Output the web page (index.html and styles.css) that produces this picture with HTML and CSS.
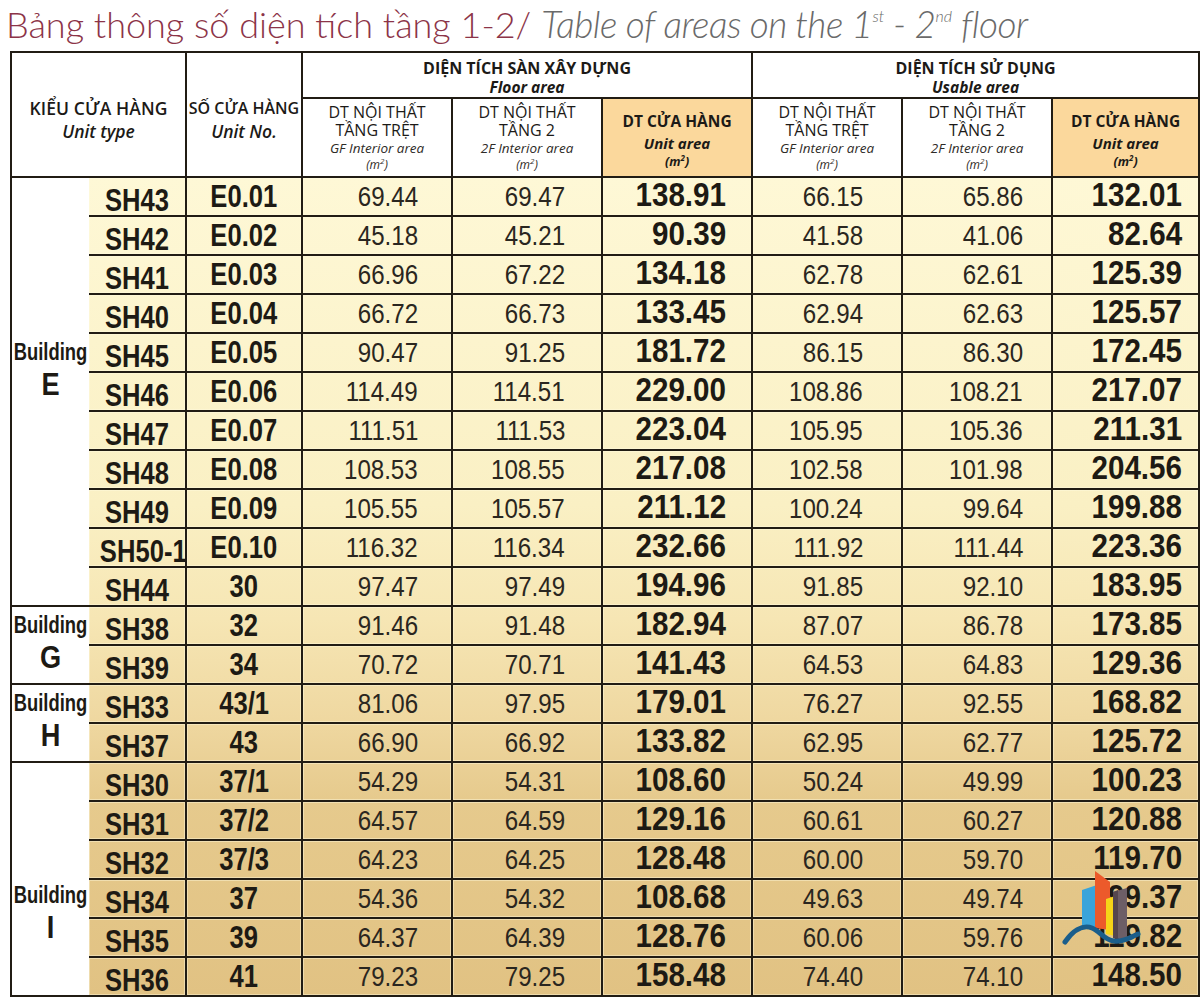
FILE: index.html
```html
<!DOCTYPE html>
<html lang="vi">
<head>
<meta charset="utf-8">
<title>Bảng thông số diện tích tầng 1-2</title>
<link rel="stylesheet" href="styles.css">
</head>
<body>
<div class="page">
  <h1 class="title"><span class="vi">Bảng thông số diện tích tầng 1-2/</span> <span class="en">Table of areas on the 1<sup>st</sup> - 2<sup>nd</sup> floor</span></h1>
  <table class="areas">
    <colgroup>
      <col class="c-bldg"><col class="c-type"><col class="c-no">
      <col class="c-val"><col class="c-val"><col class="c-val">
      <col class="c-val"><col class="c-val"><col class="c-last">
    </colgroup>
    <thead>
      <tr class="h1">
        <th rowspan="2" colspan="2" class="hd-main"><span class="m1 wide">KIỂU CỬA HÀNG</span><em class="m2">Unit type</em></th>
        <th rowspan="2" class="hd-main"><span class="m1">SỐ CỬA HÀNG</span><em class="m2">Unit No.</em></th>
        <th colspan="3" class="hd-group"><span class="g1">DIỆN TÍCH SÀN XÂY DỰNG</span><em class="g2">Floor area</em></th>
        <th colspan="3" class="hd-group"><span class="g1">DIỆN TÍCH SỬ DỤNG</span><em class="g2">Usable area</em></th>
      </tr>
      <tr class="h2">
        <th class="hd-sub"><span class="s1">DT NỘI THẤT</span><span class="s2">TẦNG TRỆT</span><em class="s3">GF Interior area</em><em class="s4">(m<sup>2</sup>)</em></th>
        <th class="hd-sub"><span class="s1">DT NỘI THẤT</span><span class="s2">TẦNG 2</span><em class="s3">2F Interior area</em><em class="s4">(m<sup>2</sup>)</em></th>
        <th class="hd-total"><span class="u1">DT CỬA HÀNG</span><em class="u2">Unit area</em><em class="u3">(m<sup>2</sup>)</em></th>
        <th class="hd-sub"><span class="s1">DT NỘI THẤT</span><span class="s2">TẦNG TRỆT</span><em class="s3">GF Interior area</em><em class="s4">(m<sup>2</sup>)</em></th>
        <th class="hd-sub"><span class="s1">DT NỘI THẤT</span><span class="s2">TẦNG 2</span><em class="s3">2F Interior area</em><em class="s4">(m<sup>2</sup>)</em></th>
        <th class="hd-total"><span class="u1">DT CỬA HÀNG</span><em class="u2">Unit area</em><em class="u3">(m<sup>2</sup>)</em></th>
      </tr>
    </thead>
    <tbody>
      <tr><td rowspan="11" class="bldg bldg-e"><span class="b-word">Building</span><span class="b-letter">E</span></td><td class="type"><span class="n">SH43</span></td><td class="no"><span class="n">E0.01</span></td><td class="v v4"><span class="n">69.44</span></td><td class="v v5"><span class="n">69.47</span></td><td class="t t6"><span class="n">138.91</span></td><td class="v v7"><span class="n">66.15</span></td><td class="v v8"><span class="n">65.86</span></td><td class="t t9"><span class="n">132.01</span></td></tr>
      <tr><td class="type"><span class="n">SH42</span></td><td class="no"><span class="n">E0.02</span></td><td class="v v4"><span class="n">45.18</span></td><td class="v v5"><span class="n">45.21</span></td><td class="t t6"><span class="n">90.39</span></td><td class="v v7"><span class="n">41.58</span></td><td class="v v8"><span class="n">41.06</span></td><td class="t t9"><span class="n">82.64</span></td></tr>
      <tr><td class="type"><span class="n">SH41</span></td><td class="no"><span class="n">E0.03</span></td><td class="v v4"><span class="n">66.96</span></td><td class="v v5"><span class="n">67.22</span></td><td class="t t6"><span class="n">134.18</span></td><td class="v v7"><span class="n">62.78</span></td><td class="v v8"><span class="n">62.61</span></td><td class="t t9"><span class="n">125.39</span></td></tr>
      <tr><td class="type"><span class="n">SH40</span></td><td class="no"><span class="n">E0.04</span></td><td class="v v4"><span class="n">66.72</span></td><td class="v v5"><span class="n">66.73</span></td><td class="t t6"><span class="n">133.45</span></td><td class="v v7"><span class="n">62.94</span></td><td class="v v8"><span class="n">62.63</span></td><td class="t t9"><span class="n">125.57</span></td></tr>
      <tr><td class="type"><span class="n">SH45</span></td><td class="no"><span class="n">E0.05</span></td><td class="v v4"><span class="n">90.47</span></td><td class="v v5"><span class="n">91.25</span></td><td class="t t6"><span class="n">181.72</span></td><td class="v v7"><span class="n">86.15</span></td><td class="v v8"><span class="n">86.30</span></td><td class="t t9"><span class="n">172.45</span></td></tr>
      <tr><td class="type"><span class="n">SH46</span></td><td class="no"><span class="n">E0.06</span></td><td class="v v4"><span class="n">114.49</span></td><td class="v v5"><span class="n">114.51</span></td><td class="t t6"><span class="n">229.00</span></td><td class="v v7"><span class="n">108.86</span></td><td class="v v8"><span class="n">108.21</span></td><td class="t t9"><span class="n">217.07</span></td></tr>
      <tr><td class="type"><span class="n">SH47</span></td><td class="no"><span class="n">E0.07</span></td><td class="v v4"><span class="n">111.51</span></td><td class="v v5"><span class="n">111.53</span></td><td class="t t6"><span class="n">223.04</span></td><td class="v v7"><span class="n">105.95</span></td><td class="v v8"><span class="n">105.36</span></td><td class="t t9"><span class="n">211.31</span></td></tr>
      <tr><td class="type"><span class="n">SH48</span></td><td class="no"><span class="n">E0.08</span></td><td class="v v4"><span class="n">108.53</span></td><td class="v v5"><span class="n">108.55</span></td><td class="t t6"><span class="n">217.08</span></td><td class="v v7"><span class="n">102.58</span></td><td class="v v8"><span class="n">101.98</span></td><td class="t t9"><span class="n">204.56</span></td></tr>
      <tr><td class="type"><span class="n">SH49</span></td><td class="no"><span class="n">E0.09</span></td><td class="v v4"><span class="n">105.55</span></td><td class="v v5"><span class="n">105.57</span></td><td class="t t6"><span class="n">211.12</span></td><td class="v v7"><span class="n">100.24</span></td><td class="v v8"><span class="n">99.64</span></td><td class="t t9"><span class="n">199.88</span></td></tr>
      <tr><td class="type"><span class="n">SH50-1</span></td><td class="no"><span class="n">E0.10</span></td><td class="v v4"><span class="n">116.32</span></td><td class="v v5"><span class="n">116.34</span></td><td class="t t6"><span class="n">232.66</span></td><td class="v v7"><span class="n">111.92</span></td><td class="v v8"><span class="n">111.44</span></td><td class="t t9"><span class="n">223.36</span></td></tr>
      <tr><td class="type"><span class="n">SH44</span></td><td class="no"><span class="n">30</span></td><td class="v v4"><span class="n">97.47</span></td><td class="v v5"><span class="n">97.49</span></td><td class="t t6"><span class="n">194.96</span></td><td class="v v7"><span class="n">91.85</span></td><td class="v v8"><span class="n">92.10</span></td><td class="t t9"><span class="n">183.95</span></td></tr>
      <tr><td rowspan="2" class="bldg bldg-g"><span class="b-word">Building</span><span class="b-letter">G</span></td><td class="type"><span class="n">SH38</span></td><td class="no"><span class="n">32</span></td><td class="v v4"><span class="n">91.46</span></td><td class="v v5"><span class="n">91.48</span></td><td class="t t6"><span class="n">182.94</span></td><td class="v v7"><span class="n">87.07</span></td><td class="v v8"><span class="n">86.78</span></td><td class="t t9"><span class="n">173.85</span></td></tr>
      <tr><td class="type"><span class="n">SH39</span></td><td class="no"><span class="n">34</span></td><td class="v v4"><span class="n">70.72</span></td><td class="v v5"><span class="n">70.71</span></td><td class="t t6"><span class="n">141.43</span></td><td class="v v7"><span class="n">64.53</span></td><td class="v v8"><span class="n">64.83</span></td><td class="t t9"><span class="n">129.36</span></td></tr>
      <tr><td rowspan="2" class="bldg bldg-h"><span class="b-word">Building</span><span class="b-letter">H</span></td><td class="type"><span class="n">SH33</span></td><td class="no"><span class="n">43/1</span></td><td class="v v4"><span class="n">81.06</span></td><td class="v v5"><span class="n">97.95</span></td><td class="t t6"><span class="n">179.01</span></td><td class="v v7"><span class="n">76.27</span></td><td class="v v8"><span class="n">92.55</span></td><td class="t t9"><span class="n">168.82</span></td></tr>
      <tr><td class="type"><span class="n">SH37</span></td><td class="no"><span class="n">43</span></td><td class="v v4"><span class="n">66.90</span></td><td class="v v5"><span class="n">66.92</span></td><td class="t t6"><span class="n">133.82</span></td><td class="v v7"><span class="n">62.95</span></td><td class="v v8"><span class="n">62.77</span></td><td class="t t9"><span class="n">125.72</span></td></tr>
      <tr><td rowspan="6" class="bldg bldg-i"><span class="b-word">Building</span><span class="b-letter">I</span></td><td class="type"><span class="n">SH30</span></td><td class="no"><span class="n">37/1</span></td><td class="v v4"><span class="n">54.29</span></td><td class="v v5"><span class="n">54.31</span></td><td class="t t6"><span class="n">108.60</span></td><td class="v v7"><span class="n">50.24</span></td><td class="v v8"><span class="n">49.99</span></td><td class="t t9"><span class="n">100.23</span></td></tr>
      <tr><td class="type"><span class="n">SH31</span></td><td class="no"><span class="n">37/2</span></td><td class="v v4"><span class="n">64.57</span></td><td class="v v5"><span class="n">64.59</span></td><td class="t t6"><span class="n">129.16</span></td><td class="v v7"><span class="n">60.61</span></td><td class="v v8"><span class="n">60.27</span></td><td class="t t9"><span class="n">120.88</span></td></tr>
      <tr><td class="type"><span class="n">SH32</span></td><td class="no"><span class="n">37/3</span></td><td class="v v4"><span class="n">64.23</span></td><td class="v v5"><span class="n">64.25</span></td><td class="t t6"><span class="n">128.48</span></td><td class="v v7"><span class="n">60.00</span></td><td class="v v8"><span class="n">59.70</span></td><td class="t t9"><span class="n">119.70</span></td></tr>
      <tr><td class="type"><span class="n">SH34</span></td><td class="no"><span class="n">37</span></td><td class="v v4"><span class="n">54.36</span></td><td class="v v5"><span class="n">54.32</span></td><td class="t t6"><span class="n">108.68</span></td><td class="v v7"><span class="n">49.63</span></td><td class="v v8"><span class="n">49.74</span></td><td class="t t9"><span class="n">99.37</span></td></tr>
      <tr><td class="type"><span class="n">SH35</span></td><td class="no"><span class="n">39</span></td><td class="v v4"><span class="n">64.37</span></td><td class="v v5"><span class="n">64.39</span></td><td class="t t6"><span class="n">128.76</span></td><td class="v v7"><span class="n">60.06</span></td><td class="v v8"><span class="n">59.76</span></td><td class="t t9"><span class="n">119.82</span></td></tr>
      <tr><td class="type"><span class="n">SH36</span></td><td class="no"><span class="n">41</span></td><td class="v v4"><span class="n">79.23</span></td><td class="v v5"><span class="n">79.25</span></td><td class="t t6"><span class="n">158.48</span></td><td class="v v7"><span class="n">74.40</span></td><td class="v v8"><span class="n">74.10</span></td><td class="t t9"><span class="n">148.50</span></td></tr>
    </tbody>
  </table>
  <svg class="logo" viewBox="0 0 82 80" width="82" height="80" aria-hidden="true">
    <polygon points="20,22 35,17 35,60 20,58" fill="#3aa4da"/>
    <polygon points="33,3 48,14 48,62 33,60" fill="#ec5a2b"/>
    <polygon points="44,31 53,28 53,68 44,66" fill="#f5d418"/>
    <polygon points="51,24 65,20 65,72 51,70" fill="#6d5e66"/>
    <polygon points="51,24 56,22 56,71 51,70" fill="#54464e"/>
    <path d="M3,74 C10,64 20,56 30,60 C38,63 42,72 52,73 C60,74 68,70 76,66" fill="none" stroke="#1b5e8b" stroke-width="5" stroke-linecap="round"/>
  </svg>
</div>
</body>
</html>
```
FILE: styles.css
```css
html, body {
  margin: 0;
  padding: 0;
  background: #ffffff;
}

.page {
  position: relative;
  width: 1200px;
  height: 997px;
  overflow: hidden;
}

.title {
  margin: 0;
  padding: 2px 0 0 6px;
  height: 51px;
  box-sizing: border-box;
  font-family: Lato, "Open Sans", sans-serif;
  font-weight: 300;
  font-size: 37px;
  line-height: 44px;
  white-space: nowrap;
}

.title .vi {
  color: #8c3448;
  font-size: 36px;
}

.title .en {
  color: #6a6a6a;
  font-style: italic;
  letter-spacing: -0.5px;
}

.title sup {
  font-size: 16px;
  vertical-align: 16px;
  line-height: 0;
  letter-spacing: 0;
}

.areas {
  margin-left: 10px;
  border-collapse: collapse;
  table-layout: fixed;
  width: 1188px;
  color: #1d1a14;
}

.c-bldg { width: 78px; }
.c-type { width: 97px; }
.c-no { width: 116px; }
.c-val { width: 150px; }
.c-last { width: 147px; }

.areas th,
.areas td {
  border: 2px solid #211c14;
  padding: 0;
  text-align: center;
  vertical-align: middle;
}

.areas thead th {
  background: #ffffff;
  font-family: "Open Sans", "Liberation Sans", sans-serif;
  color: #1c1a17;
  white-space: nowrap;
}

.areas thead th span,
.areas thead th em {
  display: block;
}

.areas em {
  font-style: italic;
}

.h1 { height: 46px; }
.h2 { height: 79px; }

.areas .hd-main {
  padding-top: 10px;
}

.hd-main .m1 {
  font-size: 16px;
  font-weight: 600;
  line-height: 23px;
}

.hd-main .m1.wide {
  font-size: 17.5px;
  letter-spacing: 0.1px;
}

.hd-main .m2 {
  font-size: 17.5px;
  font-weight: 600;
  line-height: 22px;
}

.areas .hd-group {
  padding-top: 5px;
}

.hd-group .g1 {
  font-size: 16px;
  font-weight: 700;
  line-height: 20px;
}

.hd-group .g2 {
  font-size: 15.5px;
  font-weight: 700;
  line-height: 19px;
}

.hd-sub .s1,
.hd-sub .s2 {
  font-size: 16px;
  font-weight: 400;
  line-height: 18px;
}

.hd-sub .s2 {
  line-height: 19px;
}

.hd-sub .s3 {
  font-size: 13.5px;
  font-weight: 400;
  line-height: 17px;
  color: #2e2b27;
}

.hd-sub .s4 {
  font-size: 12px;
  font-weight: 400;
  line-height: 15px;
  color: #2e2b27;
}

.areas sup {
  font-size: 8px;
  line-height: 0;
  vertical-align: 5px;
}

.areas thead .hd-total {
  background: #fbd89c;
  padding-top: 4px;
  font-weight: 700;
}

.hd-total .u1 {
  font-size: 15.5px;
  line-height: 22px;
}

.hd-total .u2 {
  font-size: 15px;
  line-height: 22px;
}

.hd-total .u3 {
  font-size: 12.5px;
  line-height: 16px;
}

.areas tbody {
  background: linear-gradient(to bottom, #fef8d6 0%, #faf0c4 40%, #f6e6b4 54%, #efd8a1 66%, #e6ca8d 76%, #e1c283 100%);
}

.areas tbody tr {
  height: 39px;
}

.areas tbody td {
  font-family: "Liberation Sans", Arial, sans-serif;
  line-height: 28px;
  white-space: nowrap;
  box-shadow: inset 0 0 0 1px rgba(255, 250, 225, 0.45);
}

.n {
  display: inline-block;
}

.areas tbody .bldg {
  background: #ffffff;
  border-right-style: hidden;
  box-shadow: none;
  line-height: 1;
}

.areas .bldg-e { padding-bottom: 42px; }
.areas .bldg-g { padding-bottom: 4px; }
.areas .bldg-h { padding-bottom: 4px; }
.areas .bldg-i { padding-top: 68px; }

.b-word {
  display: block;
  margin: 0 -14px;
  font-size: 23px;
  font-weight: 700;
  transform: scaleX(0.8);
}

.b-letter {
  display: block;
  margin: 4px -10px 0;
  font-size: 32px;
  font-weight: 700;
  transform: scaleX(0.85);
}

.areas .type,
.areas .no {
  font-size: 32px;
  font-weight: 700;
}

.areas .type {
  padding-top: 6px;
}

.areas .no {
  padding-bottom: 2px;
}

.type .n,
.no .n {
  transform: scaleX(0.8);
}

.areas .v {
  font-size: 28px;
  font-weight: 400;
  text-align: right;
  color: #2a2620;
}

.v .n {
  transform: scaleX(0.86);
  transform-origin: right center;
}

.areas .t {
  font-size: 34px;
  font-weight: 700;
  text-align: right;
  padding-bottom: 5px;
}

.t .n {
  transform: scaleX(0.87);
  transform-origin: right center;
}

.areas .v4 { padding-right: 33px; }
.areas .v5 { padding-right: 36px; }
.areas .t6 { padding-right: 25px; }
.areas .v7 { padding-right: 38px; }
.areas .v8 { padding-right: 28px; }
.areas .t9 { padding-right: 16px; }

.logo {
  position: absolute;
  left: 1062px;
  top: 868px;
}
```
